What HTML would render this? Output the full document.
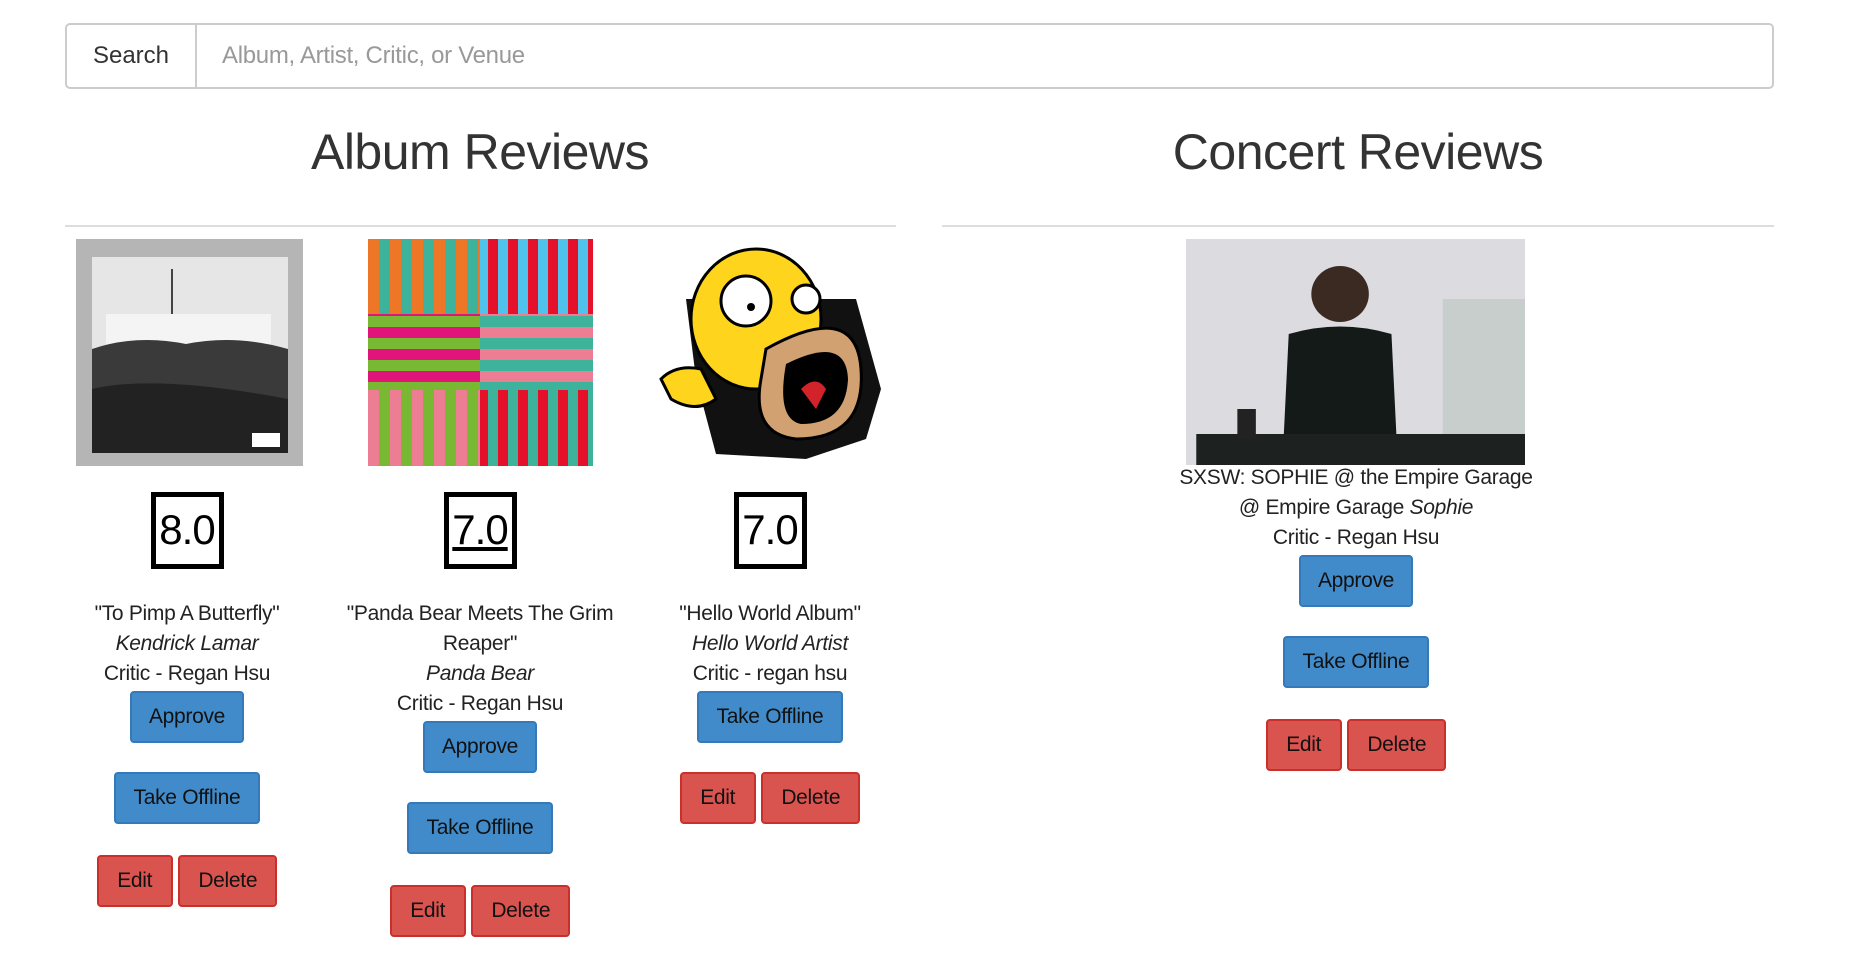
<!DOCTYPE html>
<html><head><meta charset="utf-8"><style>
*{box-sizing:border-box;margin:0;padding:0}
body{width:1854px;height:962px;background:#fff;font-family:"Liberation Sans",sans-serif;color:#333;position:relative;overflow:hidden}
.abs{position:absolute}
.search{left:65px;top:23px;width:1709px;height:66px;border:2px solid #ccc;border-radius:5px}
.addon{position:absolute;left:0;top:0;width:130px;height:62px;border-right:2px solid #ccc;font-size:24px;line-height:62px;text-align:center;color:#333}
.ph{position:absolute;left:155px;top:0;line-height:62px;font-size:24px;color:#999;letter-spacing:-0.3px}
h1{position:absolute;font-weight:normal;font-size:50px;top:123px;text-align:center;width:600px;letter-spacing:-0.5px}
.hr{position:absolute;top:225px;height:2px;background:#ddd}
.col{position:absolute;width:290px;text-align:center;font-size:21px;line-height:30px;color:#222;letter-spacing:-0.3px}
.score{display:inline-block;width:73px;height:77px;border:5px solid #000;font-size:42px;line-height:66px;color:#000;letter-spacing:-1px}
.btn{display:inline-block;height:52px;line-height:48px;border-radius:4px;font-size:21px;color:#111;border:2px solid}
.b{background:#428bca;border-color:#3579b8}
.r{background:#d9534f;border-color:#c9302c}
</style></head><body>
<div class="abs search"><div class="addon">Search</div><div class="ph">Album, Artist, Critic, or Venue</div></div>
<h1 style="left:180px">Album Reviews</h1>
<h1 style="left:1058px">Concert Reviews</h1>
<div class="hr" style="left:65px;width:831px"></div>
<div class="hr" style="left:942px;width:832px"></div>

<!-- Kendrick -->
<svg class="abs" style="left:76px;top:239px" width="227" height="227" viewBox="0 0 227 227">
<rect width="227" height="227" fill="#b5b5b5"/><rect x="16" y="18" width="196" height="196" fill="#e6e6e6"/>
<rect x="30" y="75" width="165" height="30" fill="#f4f4f4"/><rect x="95" y="30" width="2" height="45" fill="#444"/>
<path d="M16 110 Q60 95 110 105 Q160 95 212 110 L212 214 L16 214Z" fill="#3a3a3a"/>
<path d="M16 150 Q80 135 212 160 L212 214 L16 214Z" fill="#222"/>
<rect x="176" y="194" width="28" height="14" fill="#fff"/>
</svg>
<!-- Panda -->
<svg class="abs" style="left:368px;top:239px" width="225" height="227" viewBox="0 0 225 227">
<defs>
<pattern id="p1" width="22" height="10" patternUnits="userSpaceOnUse"><rect width="11" height="10" fill="#ee7627"/><rect x="11" width="11" height="10" fill="#3db39b"/></pattern>
<pattern id="p2" width="20" height="10" patternUnits="userSpaceOnUse"><rect width="10" height="10" fill="#e5112b"/><rect x="10" width="10" height="10" fill="#4fc3ec"/></pattern>
<pattern id="p3" width="10" height="22" patternUnits="userSpaceOnUse"><rect width="10" height="11" fill="#e0147a"/><rect y="11" width="10" height="11" fill="#79b833"/></pattern>
<pattern id="p4" width="10" height="22" patternUnits="userSpaceOnUse"><rect width="10" height="11" fill="#ec7d93"/><rect y="11" width="10" height="11" fill="#3db39b"/></pattern>
<pattern id="p5" width="22" height="10" patternUnits="userSpaceOnUse"><rect width="11" height="10" fill="#ec7d93"/><rect x="11" width="11" height="10" fill="#79b833"/></pattern>
<pattern id="p6" width="20" height="10" patternUnits="userSpaceOnUse"><rect width="10" height="10" fill="#3db39b"/><rect x="10" width="10" height="10" fill="#e5112b"/></pattern>
</defs>
<rect width="112" height="75" fill="url(#p1)"/><rect x="112" width="113" height="75" fill="url(#p2)"/>
<rect y="75" width="112" height="76" fill="url(#p3)"/><rect x="112" y="75" width="113" height="76" fill="url(#p4)"/>
<rect y="151" width="112" height="76" fill="url(#p5)"/><rect x="112" y="151" width="113" height="76" fill="url(#p6)"/>
</svg>
<!-- Homer -->
<svg class="abs" style="left:656px;top:239px" width="230" height="227" viewBox="0 0 230 227">
<path d="M30 60 L200 60 L225 150 L210 200 L150 220 L60 215 L40 140Z" fill="#111"/>
<ellipse cx="100" cy="80" rx="65" ry="70" fill="#fed41d" stroke="#000" stroke-width="3"/>
<path d="M110 110 Q200 60 205 130 Q210 200 140 200 Q95 195 105 140Z" fill="#d1a171" stroke="#000" stroke-width="3"/>
<path d="M130 125 Q190 95 192 140 Q190 185 145 185 Q120 180 130 125Z" fill="#000"/>
<path d="M145 150 Q160 135 170 150 L160 170Z" fill="#d2232a"/>
<circle cx="90" cy="62" r="25" fill="#fff" stroke="#000" stroke-width="3"/><circle cx="95" cy="68" r="4" fill="#000"/>
<circle cx="150" cy="60" r="14" fill="#fff" stroke="#000" stroke-width="3"/>
<path d="M5 140 Q20 125 45 130 L60 160 Q40 175 15 160Z" fill="#fed41d" stroke="#000" stroke-width="3"/>
</svg>
<!-- Sophie -->
<svg class="abs" style="left:1186px;top:239px" width="339" height="226" viewBox="0 0 330 226" preserveAspectRatio="none">
<rect width="330" height="226" fill="#dcdbe0"/><rect x="250" y="60" width="80" height="150" fill="#b9c4bd" opacity=".6"/>
<circle cx="150" cy="55" r="28" fill="#3a2a22"/>
<path d="M100 95 Q150 80 200 95 L205 200 L95 200Z" fill="#141a18"/>
<rect x="10" y="195" width="320" height="31" fill="#1d2120"/><rect x="50" y="170" width="18" height="30" fill="#222"/>
</svg>

<!-- col1 -->
<div class="col" style="left:42px;top:492px"><div class="score">8.0</div></div>
<div class="col" style="left:42px;top:599px">"To Pimp A Butterfly"<br><i>Kendrick Lamar</i><br>Critic - Regan Hsu</div>
<div class="col" style="left:42px;top:691px"><span class="btn b" style="width:114px">Approve</span></div>
<div class="col" style="left:42px;top:772px"><span class="btn b" style="width:146px">Take Offline</span></div>
<div class="col" style="left:42px;top:855px"><span class="btn r" style="width:76px">Edit</span> <span class="btn r" style="width:99px">Delete</span></div>
<!-- col2 -->
<div class="col" style="left:335px;top:492px"><div class="score"><u>7.0</u></div></div>
<div class="col" style="left:335px;top:599px">"Panda Bear Meets The Grim Reaper"<br><i>Panda Bear</i><br>Critic - Regan Hsu</div>
<div class="col" style="left:335px;top:721px"><span class="btn b" style="width:114px">Approve</span></div>
<div class="col" style="left:335px;top:802px"><span class="btn b" style="width:146px">Take Offline</span></div>
<div class="col" style="left:335px;top:885px"><span class="btn r" style="width:76px">Edit</span> <span class="btn r" style="width:99px">Delete</span></div>
<!-- col3 -->
<div class="col" style="left:625px;top:492px"><div class="score">7.0</div></div>
<div class="col" style="left:625px;top:599px">"Hello World Album"<br><i>Hello World Artist</i><br>Critic - regan hsu</div>
<div class="col" style="left:625px;top:691px"><span class="btn b" style="width:146px">Take Offline</span></div>
<div class="col" style="left:625px;top:772px"><span class="btn r" style="width:76px">Edit</span> <span class="btn r" style="width:99px">Delete</span></div>
<!-- concert -->
<div class="col" style="left:1166px;width:380px;top:463px">SXSW: SOPHIE @ the Empire Garage<br>@ Empire Garage <i>Sophie</i><br>Critic - Regan Hsu</div>
<div class="col" style="left:1211px;top:555px"><span class="btn b" style="width:114px">Approve</span></div>
<div class="col" style="left:1211px;top:636px"><span class="btn b" style="width:146px">Take Offline</span></div>
<div class="col" style="left:1211px;top:719px"><span class="btn r" style="width:76px">Edit</span> <span class="btn r" style="width:99px">Delete</span></div>
</body></html>
